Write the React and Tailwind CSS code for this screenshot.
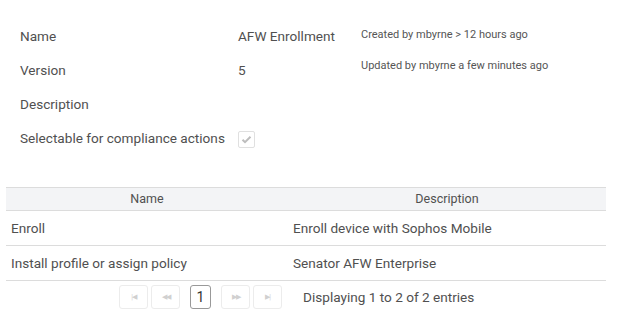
import React from "react";

function PagerBtn({ children }) {
  return (
    <div className="w-[29px] h-[24px] border border-[#ececec] rounded-[3px] flex items-center justify-center text-[#d0d0d0] text-[7px] tracking-[-1px]">
      {children}
    </div>
  );
}

export default function App() {
  const font = { fontFamily: "Roboto, 'Noto Sans', sans-serif" };
  return (
    <div className="w-[625px] h-[334px] bg-white text-[13.6px] text-[#505050] relative" style={font}>
      <div className="pt-[19px] pl-[20px]">
        <div className="flex h-[34px] items-center">
          <div className="w-[218px]">Name</div>
          <div className="w-[123px]">AFW Enrollment</div>
          <div className="text-[11px] text-[#555] -mt-[2px]">Created by mbyrne &gt; 12 hours ago</div>
        </div>
        <div className="flex h-[34px] items-center">
          <div className="w-[218px]">Version</div>
          <div className="w-[123px]">5</div>
          <div className="text-[11px] text-[#555] -mt-[7px]">Updated by mbyrne a few minutes ago</div>
        </div>
        <div className="flex h-[34px] items-center">
          <div className="w-[218px]">Description</div>
        </div>
        <div className="flex h-[34px] items-center">
          <div className="w-[218px]">Selectable for compliance actions</div>
          <div className="w-[17px] h-[17px] border border-[#e0e0e0] rounded-[2px] flex items-center justify-center mt-[3px]">
            <svg width="11" height="9" viewBox="0 0 11 9">
              <path d="M1.5 4.8 L4 7.2 L9.5 1.8" fill="none" stroke="#bdbdbd" strokeWidth="2" />
            </svg>
          </div>
        </div>
      </div>
      <div className="mt-[32px] ml-[6px] w-[600px]">
        <div className="flex h-[24px] bg-[#f3f4f6] border-y border-[#dcdcdc] items-center">
          <div className="w-[282px] text-center text-[12.5px]">Name</div>
          <div className="flex-1 text-center text-[12.5px]">Description</div>
        </div>
        <div className="flex h-[35px] border-b border-[#dcdcdc] items-center">
          <div className="w-[282px] pl-[5px]">Enroll</div>
          <div className="flex-1 pl-[5px]">Enroll device with Sophos Mobile</div>
        </div>
        <div className="flex h-[35px] border-b border-[#dcdcdc] items-center">
          <div className="w-[282px] pl-[5px]">Install profile or assign policy</div>
          <div className="flex-1 pl-[5px]">Senator AFW Enterprise</div>
        </div>
        <div className="flex items-center mt-[4px] pl-[113px]">
          <PagerBtn>|◀</PagerBtn>
          <div className="w-[3px]" />
          <PagerBtn>◀◀</PagerBtn>
          <div className="w-[10px]" />
          <div className="w-[21px] h-[24px] border border-[#999] rounded-[3px] flex items-center justify-center text-[14px] text-[#333]">1</div>
          <div className="w-[10px]" />
          <PagerBtn>▶▶</PagerBtn>
          <div className="w-[3px]" />
          <PagerBtn>▶|</PagerBtn>
          <div className="ml-[21px]">Displaying 1 to 2 of 2 entries</div>
        </div>
      </div>
    </div>
  );
}
